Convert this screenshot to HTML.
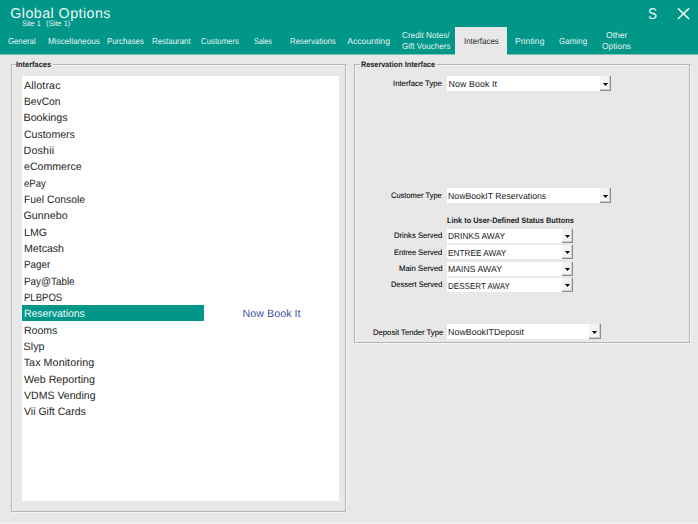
<!DOCTYPE html>
<html lang="en"><head><meta charset="utf-8"><title>Global Options</title>
<style>
html,body{margin:0;padding:0}
body{width:698px;height:524px;overflow:hidden;background:#e8e8e8;font-family:"Liberation Sans", sans-serif;position:relative;color:#1c1c1c}
.t{position:absolute;transform-origin:0 0;text-rendering:geometricPrecision;white-space:pre;line-height:1;margin:0;padding:0;font-weight:normal}
header{position:absolute;left:0;top:0;width:698px;height:54px;background:#009688}
.edge{position:absolute;top:54px;height:1px;background:#7cc3bc}
nav .t{color:#e4f3f1}
.active{position:absolute;left:455px;top:27px;width:52px;height:28px;background:#e8e8e8}
.box{position:absolute;box-sizing:border-box;border:1px solid #b6b6b6}
.boxw{position:absolute;box-sizing:border-box;border:1px solid #f4f4f4}
.legbg{position:absolute;background:#e8e8e8;height:4px}
ul{list-style:none;margin:0;padding:0}
li{color:#262626}
label{color:#000;-webkit-text-stroke:0.07px #000}
.list{position:absolute;left:22px;top:76px;width:317px;height:425px;background:#fff}
.row{position:absolute;left:0;width:182px;height:16px}
.row.sel{background:#009688}
.row.sel .t{color:#f2fbfa}
.note{color:#4555a1}
.combo{position:absolute}
.cb{position:absolute;left:0;top:0;height:100%;background:#fff}
.btn{position:absolute;top:0;height:100%;background:#f3f3f3;box-sizing:border-box;border-right:1px solid #8c8c8c;border-bottom:1px solid #8c8c8c;box-shadow:inset -1px -1px 0 #cfcfcf}
.arr{position:absolute}
.strip{position:absolute;left:0;top:522.7px;width:698px;height:1.3px;background:#f2f2f2}
</style></head><body>
<header>
<h1 class="t" style="left:10.30px;top:6px;line-height:16px;font-size:14.20px;letter-spacing:0.482px;color:#eef8f7;">Global Options</h1>
<div class="site"><span class="t" style="left:21.57px;top:19px;line-height:9px;font-size:7.80px;color:#e6f4f2;transform:scaleX(0.9452);">Site 1</span><span class="t" style="left:46.21px;top:19px;line-height:9px;font-size:7.80px;color:#e6f4f2;transform:scaleX(0.9695);">(Site 1)</span></div>
<nav><div class="active"></div>
<span class="t" style="left:8.14px;top:36px;line-height:11px;font-size:8.60px;transform:scaleX(0.9028);">General</span>
<span class="t" style="left:48.23px;top:36px;line-height:11px;font-size:8.60px;transform:scaleX(0.9515);">Miscellaneous</span>
<span class="t" style="left:107.37px;top:36px;line-height:11px;font-size:8.60px;transform:scaleX(0.9058);">Purchases</span>
<span class="t" style="left:152.36px;top:36px;line-height:11px;font-size:8.60px;transform:scaleX(0.9208);">Restaurant</span>
<span class="t" style="left:200.83px;top:36px;line-height:11px;font-size:8.60px;transform:scaleX(0.9125);">Customers</span>
<span class="t" style="left:253.55px;top:36px;line-height:11px;font-size:8.60px;letter-spacing:-0.079px;transform:scaleX(0.8400);">Sales</span>
<span class="t" style="left:289.86px;top:36px;line-height:11px;font-size:8.60px;transform:scaleX(0.9128);">Reservations</span>
<span class="t" style="left:347.20px;top:36px;line-height:11px;font-size:8.60px;letter-spacing:0.026px;">Accounting</span>
<span class="t" style="left:402.42px;top:30px;line-height:11px;font-size:8.60px;transform:scaleX(0.9479);">Credit Notes/</span>
<span class="t" style="left:402.42px;top:41px;line-height:11px;font-size:8.60px;transform:scaleX(0.9406);">Gift Vouchers</span>
<span class="t" style="left:464.35px;top:36px;line-height:11px;font-size:8.60px;color:#2a2a2a;transform:scaleX(0.9221);">Interfaces</span>
<span class="t" style="left:514.90px;top:36px;line-height:11px;font-size:8.60px;letter-spacing:0.061px;">Printing</span>
<span class="t" style="left:558.82px;top:36px;line-height:11px;font-size:8.60px;transform:scaleX(0.9408);">Gaming</span>
<span class="t" style="left:606.30px;top:30px;line-height:11px;font-size:8.60px;transform:scaleX(0.9979);">Other</span>
<span class="t" style="left:602.31px;top:41px;line-height:11px;font-size:8.60px;transform:scaleX(0.9814);">Options</span>
</nav>
<span class="t" style="left:648.09px;top:6px;line-height:18px;font-size:15.60px;color:#eaf6f5;transform:scaleX(0.8667);">S</span>
<svg style="position:absolute;left:676px;top:6px" width="15" height="15" viewBox="0 0 15 15"><path d="M1.9 2.4 L13.1 13.0 M13.1 2.4 L1.9 13.0" stroke="#f4fbfa" stroke-width="1.45" fill="none"/></svg>
<div class="edge" style="left:0;width:455px"></div><div class="edge" style="left:507px;width:191px"></div>
</header>
<section class="group" aria-label="Interfaces">
<div class="boxw" style="left:12px;top:65px;width:335px;height:448px"></div>
<div class="box" style="left:11px;top:64px;width:335px;height:448px"></div>
<div class="legbg" style="left:15.5px;top:63px;width:37.5px"></div>
<h2 class="t" style="left:16.43px;top:60px;line-height:9px;font-size:7.90px;font-weight:bold;transform:scaleX(0.9389);">Interfaces</h2>
<ul class="list">
<li class="row" style="top:0px"><span class="t" style="left:1.90px;top:4px;line-height:12px;font-size:10.70px;letter-spacing:0.139px;">Allotrac</span></li>
<li class="row" style="top:16px"><span class="t" style="left:1.73px;top:4px;line-height:12px;font-size:10.70px;transform:scaleX(0.9613);">BevCon</span></li>
<li class="row" style="top:33px"><span class="t" style="left:1.50px;top:3px;line-height:12px;font-size:10.70px;letter-spacing:0.019px;">Bookings</span></li>
<li class="row" style="top:49px"><span class="t" style="left:2.01px;top:4px;line-height:12px;font-size:10.70px;transform:scaleX(0.9827);">Customers</span></li>
<li class="row" style="top:65px"><span class="t" style="left:1.50px;top:4px;line-height:12px;font-size:10.70px;letter-spacing:0.169px;">Doshii</span></li>
<li class="row" style="top:82px"><span class="t" style="left:1.60px;top:3px;line-height:12px;font-size:10.70px;transform:scaleX(0.9910);">eCommerce</span></li>
<li class="row" style="top:98px"><span class="t" style="left:1.64px;top:4px;line-height:12px;font-size:10.70px;transform:scaleX(0.8902);">ePay</span></li>
<li class="row" style="top:114px"><span class="t" style="left:1.73px;top:4px;line-height:12px;font-size:10.70px;transform:scaleX(0.9677);">Fuel Console</span></li>
<li class="row" style="top:131px"><span class="t" style="left:1.50px;top:3px;line-height:12px;font-size:10.70px;letter-spacing:0.021px;">Gunnebo</span></li>
<li class="row" style="top:147px"><span class="t" style="left:1.70px;top:4px;line-height:12px;font-size:10.70px;transform:scaleX(0.9970);">LMG</span></li>
<li class="row" style="top:164px"><span class="t" style="left:1.71px;top:3px;line-height:12px;font-size:10.70px;transform:scaleX(0.9901);">Metcash</span></li>
<li class="row" style="top:180px"><span class="t" style="left:1.77px;top:3px;line-height:12px;font-size:10.70px;transform:scaleX(0.9170);">Pager</span></li>
<li class="row" style="top:196px"><span class="t" style="left:1.76px;top:4px;line-height:12px;font-size:10.70px;transform:scaleX(0.9230);">Pay@Table</span></li>
<li class="row" style="top:213px"><span class="t" style="left:1.79px;top:3px;line-height:12px;font-size:10.70px;transform:scaleX(0.8922);">PLBPOS</span></li>
<li class="row sel" style="top:229px"><span class="t" style="left:1.72px;top:3px;line-height:12px;font-size:10.70px;transform:scaleX(0.9740);">Reservations</span></li>
<li class="row" style="top:245px"><span class="t" style="left:1.71px;top:4px;line-height:12px;font-size:10.70px;transform:scaleX(0.9865);">Rooms</span></li>
<li class="row" style="top:262px"><span class="t" style="left:1.50px;top:3px;line-height:12px;font-size:10.70px;letter-spacing:0.079px;">Slyp</span></li>
<li class="row" style="top:278px"><span class="t" style="left:1.70px;top:3px;line-height:12px;font-size:10.70px;letter-spacing:0.082px;">Tax Monitoring</span></li>
<li class="row" style="top:294px"><span class="t" style="left:1.90px;top:4px;line-height:12px;font-size:10.70px;">Web Reporting</span></li>
<li class="row" style="top:311px"><span class="t" style="left:1.90px;top:3px;line-height:12px;font-size:10.70px;transform:scaleX(0.9873);">VDMS Vending</span></li>
<li class="row" style="top:327px"><span class="t" style="left:1.90px;top:3px;line-height:12px;font-size:10.70px;transform:scaleX(0.9843);">Vii Gift Cards</span></li>
</ul>
<span class="t note" style="left:242.60px;top:308px;line-height:12px;font-size:10.70px;letter-spacing:0.029px;">Now Book It</span>
</section>
<section class="group" aria-label="Reservation Interface">
<div class="boxw" style="left:355px;top:65px;width:336px;height:279px"></div>
<div class="box" style="left:354px;top:64px;width:336px;height:279px"></div>
<div class="legbg" style="left:359.5px;top:63px;width:77px"></div>
<h2 class="t" style="left:360.54px;top:60px;line-height:9px;font-size:7.90px;font-weight:bold;transform:scaleX(0.9227);">Reservation Interface</h2>
<div class="field"><label class="t" style="left:393.42px;top:79px;line-height:9px;font-size:8.00px;transform:scaleX(0.9668);">Interface Type</label><div class="combo" style="left:447px;top:76px;width:164px;height:15px"><div class="cb" style="width:153px"></div><span class="t val" style="left:1.50px;top:3px;line-height:11px;font-size:8.80px;letter-spacing:0.110px;">Now Book It</span><div class="btn" style="left:153px;width:11px"><svg class="arr" style="left:1.60px;top:5.50px" width="7" height="5" viewBox="0 0 7 5"><path d="M0.9 1 L6.1 1 L3.5 4.1 Z" fill="#0a0a0a"/></svg></div></div></div>
<div class="field"><label class="t" style="left:391.32px;top:191px;line-height:9px;font-size:8.00px;transform:scaleX(0.9384);">Customer Type</label><div class="combo" style="left:447px;top:188px;width:164px;height:15px"><div class="cb" style="width:153px"></div><span class="t val" style="left:1.11px;top:3px;line-height:11px;font-size:8.80px;transform:scaleX(0.9910);">NowBookIT Reservations</span><div class="btn" style="left:153px;width:11px"><svg class="arr" style="left:1.60px;top:5.50px" width="7" height="5" viewBox="0 0 7 5"><path d="M0.9 1 L6.1 1 L3.5 4.1 Z" fill="#0a0a0a"/></svg></div></div></div>
<h3 class="t" style="left:447.43px;top:216px;line-height:9px;font-size:7.90px;font-weight:bold;transform:scaleX(0.9367);">Link to User-Defined Status Buttons</h3>
<div class="field"><label class="t" style="left:394.22px;top:231px;line-height:9px;font-size:8.00px;transform:scaleX(0.9596);">Drinks Served</label><div class="combo" style="left:447px;top:229px;width:126px;height:14px"><div class="cb" style="width:115px"></div><span class="t val" style="left:1.03px;top:2px;line-height:11px;font-size:8.80px;transform:scaleX(0.9540);">DRINKS AWAY</span><div class="btn" style="left:115px;width:11px"><svg class="arr" style="left:1.60px;top:5.00px" width="7" height="5" viewBox="0 0 7 5"><path d="M0.9 1 L6.1 1 L3.5 4.1 Z" fill="#0a0a0a"/></svg></div></div></div>
<div class="field"><label class="t" style="left:394.23px;top:248px;line-height:9px;font-size:8.00px;transform:scaleX(0.9423);">Entree Served</label><div class="combo" style="left:447px;top:245px;width:126px;height:14px"><div class="cb" style="width:115px"></div><span class="t val" style="left:1.04px;top:3px;line-height:11px;font-size:8.80px;transform:scaleX(0.9373);">ENTREE AWAY</span><div class="btn" style="left:115px;width:11px"><svg class="arr" style="left:1.60px;top:5.00px" width="7" height="5" viewBox="0 0 7 5"><path d="M0.9 1 L6.1 1 L3.5 4.1 Z" fill="#0a0a0a"/></svg></div></div></div>
<div class="field"><label class="t" style="left:398.92px;top:264px;line-height:9px;font-size:8.00px;transform:scaleX(0.9690);">Main Served</label><div class="combo" style="left:447px;top:262px;width:126px;height:14px"><div class="cb" style="width:115px"></div><span class="t val" style="left:1.01px;top:2px;line-height:11px;font-size:8.80px;transform:scaleX(0.9916);">MAINS AWAY</span><div class="btn" style="left:115px;width:11px"><svg class="arr" style="left:1.60px;top:5.00px" width="7" height="5" viewBox="0 0 7 5"><path d="M0.9 1 L6.1 1 L3.5 4.1 Z" fill="#0a0a0a"/></svg></div></div></div>
<div class="field"><label class="t" style="left:391.14px;top:280px;line-height:9px;font-size:8.00px;transform:scaleX(0.9300);">Dessert Served</label><div class="combo" style="left:447px;top:278px;width:126px;height:14px"><div class="cb" style="width:115px"></div><span class="t val" style="left:1.06px;top:3px;line-height:11px;font-size:8.80px;transform:scaleX(0.9144);">DESSERT AWAY</span><div class="btn" style="left:115px;width:11px"><svg class="arr" style="left:1.60px;top:5.00px" width="7" height="5" viewBox="0 0 7 5"><path d="M0.9 1 L6.1 1 L3.5 4.1 Z" fill="#0a0a0a"/></svg></div></div></div>
<div class="field"><label class="t" style="left:372.62px;top:328px;line-height:9px;font-size:8.00px;transform:scaleX(0.9610);">Deposit Tender Type</label><div class="combo" style="left:447px;top:324px;width:154px;height:15px"><div class="cb" style="width:142px"></div><span class="t val" style="left:1.10px;top:3px;line-height:11px;font-size:8.80px;letter-spacing:0.042px;">NowBookITDeposit</span><div class="btn" style="left:142px;width:12px"><svg class="arr" style="left:2.10px;top:5.50px" width="7" height="5" viewBox="0 0 7 5"><path d="M0.9 1 L6.1 1 L3.5 4.1 Z" fill="#0a0a0a"/></svg></div></div></div>
</section>
<div class="strip"></div>
</body></html>
